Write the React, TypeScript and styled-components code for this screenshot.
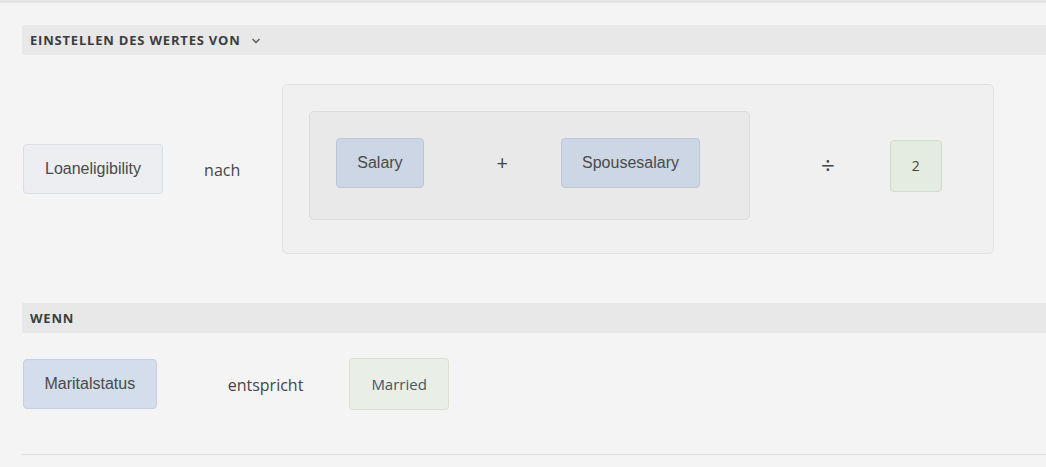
import React from 'react';
import styled, { createGlobalStyle } from 'styled-components';

const GlobalStyle = createGlobalStyle`
  html, body {
    margin: 0;
    padding: 0;
    background: #f4f4f4;
    overflow: hidden;
  }
  body {
    font-family: "Open Sans", "Liberation Sans", sans-serif;
    color: #444;
  }
`;

type Tone = 'neutral' | 'field' | 'fieldLight' | 'value' | 'valueLight';

const tones: Record<Tone, { bg: string; border: string }> = {
  neutral: { bg: '#eceef2', border: '#dadfe6' },
  field: { bg: '#ccd6e4', border: '#bcc8da' },
  fieldLight: { bg: '#d3ddeb', border: '#c4d0e1' },
  value: { bg: '#e4ebe0', border: '#d3ddcd' },
  valueLight: { bg: '#e9eee6', border: '#d9e0d4' },
};

const App = () => {
  return (
    <>
      <GlobalStyle />
      <TopEdge />
      <Page>
        <SectionBar>
          <SectionTitle>Einstellen des Wertes von</SectionTitle>
          <Chevron width="10" height="10" viewBox="0 0 10 10">
            <polyline points="1.5,3 5,6.5 8.5,3" fill="none" stroke="#555" strokeWidth="1.4" />
          </Chevron>
        </SectionBar>

        <AssignRow>
          <Token tone="neutral">Loaneligibility</Token>
          <Keyword ml={41} mr={42}>nach</Keyword>
          <Group level="outer">
            <Group level="inner">
              <Token tone="field" px={20}>Salary</Token>
              <Operator mr={53}>+</Operator>
              <Token tone="field" px={20}>Spousesalary</Token>
            </Group>
            <Operator size={24} ml={71} mr={55}>÷</Operator>
            <NumberToken tone="value">2</NumberToken>
          </Group>
        </AssignRow>

        <SectionBar>
          <SectionTitle>Wenn</SectionTitle>
        </SectionBar>

        <ConditionRow>
          <Token tone="fieldLight" px={20.5}>Maritalstatus</Token>
          <Keyword ml={71} mr={46}>entspricht</Keyword>
          <ValueToken tone="valueLight">Married</ValueToken>
        </ConditionRow>

        <Divider />
      </Page>
    </>
  );
};

export default App;

// ---------------------------
const TopEdge = styled.div`
  height: 3px;
  background: #e4e4e4;
`

const Page = styled.div`
  padding: 22px 0 0 22px;
`

const SectionBar = styled.div`
  display: flex;
  align-items: center;
  height: 30px;
  padding-left: 8px;
  background: #e8e8e8;
`

const SectionTitle = styled.span`
  font-family: "Open Sans", sans-serif;
  font-size: 13px;
  font-weight: 700;
  letter-spacing: 0.8px;
  text-transform: uppercase;
  color: #3d3d3d;
`

const Chevron = styled.svg`
  margin-left: 10px;
  margin-top: 1px;
`

const AssignRow = styled.div`
  display: flex;
  align-items: center;
  margin: 29px 0 49px 1px;
`

const ConditionRow = styled.div`
  display: flex;
  align-items: center;
  margin: 25px 0 0 1px;
  height: 51px;
`

const Token = styled.div<{ tone: Tone; px?: number }>`
  display: flex;
  align-items: center;
  height: 50px;
  box-sizing: border-box;
  padding: 0 ${p => p.px ?? 21}px;
  border-radius: 4px;
  border: 1px solid ${p => tones[p.tone].border};
  background: ${p => tones[p.tone].bg};
  font-family: "Liberation Sans", Arial, sans-serif;
  font-size: 16px;
  color: #4a4a4a;
  white-space: nowrap;
`

const NumberToken = styled(Token)`
  height: 52px;
  font-family: "Open Sans", sans-serif;
  font-size: 14px;
  color: #444;
`

const ValueToken = styled(Token)`
  height: 52px;
  font-family: "Open Sans", sans-serif;
  font-size: 15px;
  color: #4a5560;
`

const Keyword = styled.span<{ ml: number; mr: number }>`
  margin: 2px ${p => p.mr}px 0 ${p => p.ml}px;
  font-family: "Open Sans", sans-serif;
  font-size: 16px;
  color: #454545;
`

const Operator = styled.span<{ size?: number; ml?: number; mr?: number }>`
  margin: 0 ${p => p.mr ?? 54}px 2px ${p => p.ml ?? 73}px;
  font-family: "Open Sans", sans-serif;
  font-size: ${p => p.size ?? 20}px;
  font-weight: 500;
  color: #444;
`

const Group = styled.div<{ level: 'outer' | 'inner' }>`
  display: flex;
  align-items: center;
  padding: ${p => (p.level === 'outer' ? '26px 51px 33px 26px' : '26px 49px 31px 26px')};
  border-radius: 5px;
  border: 1px solid ${p => (p.level === 'outer' ? '#e2e2e2' : '#dcdcdc')};
  background: ${p => (p.level === 'outer' ? '#f0f0f0' : '#e9e9e9')};
`

const Divider = styled.div`
  margin-top: 45px;
  height: 1px;
  background: #dcdcdc;
`
